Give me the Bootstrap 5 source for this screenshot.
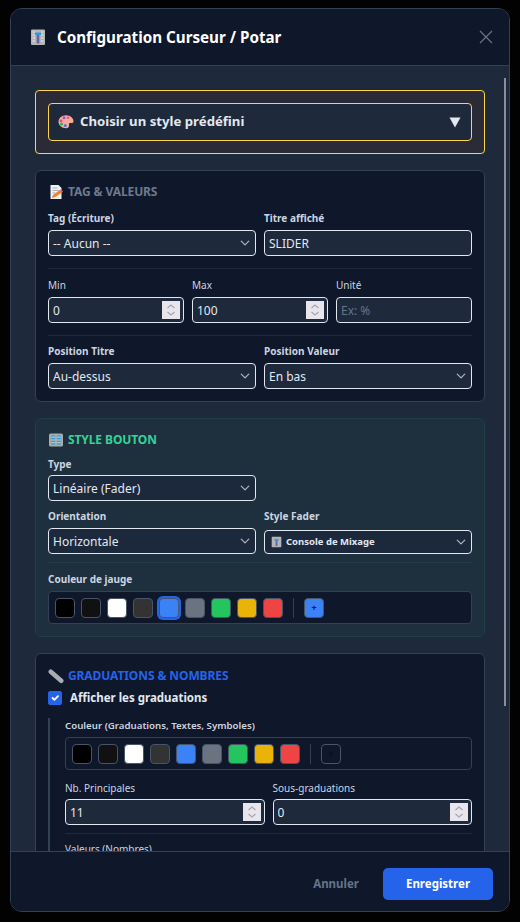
<!DOCTYPE html>
<html lang="fr" data-bs-theme="dark">
<head>
<meta charset="utf-8">
<title>Configuration Curseur / Potar</title>
<link rel="stylesheet" href="https://cdn.jsdelivr.net/npm/bootstrap@5.3.0/dist/css/bootstrap.min.css">
<style>
html,body{height:100%;margin:0;background:#020203;overflow:hidden;font-family:"Noto Sans",sans-serif}
.shell{height:922px;padding:8px 10px 10px}
.pane{height:904px;background:#0f172a;border:1px solid #334155;border-radius:12px;overflow:hidden;color:#e2e8f0;position:relative}
.pane .modal-header{height:57px;flex:none;padding:0 16px 0 19px;background:#0f172a;border-bottom:1px solid #334155;gap:11px;border-radius:0}
.ttl{font-size:15.2px;font-weight:700;color:#fff}
.xbtn{width:14px;height:14px;padding:0;border:0;background:none;display:flex}
.pane .modal-body{flex:1 1 0;min-height:0;overflow:hidden;background:#1e293b;padding:24px 24px 0}
.sbar{position:absolute;right:3px;top:69px;height:628px;width:2px;background:#8a8f96}
.pane .modal-footer{height:60px;flex:none;align-items:flex-start;background:#0f172a;border-top:1px solid #334155;padding:16px 16px 0 0;gap:24px;border-radius:0}
.pane .modal-footer>*{margin:0}
.btn-ann{height:32px;font-size:11.5px;font-weight:700;color:#64748b;padding:0;border:0;background:none}
.btn-save{width:110px;height:32px;font-size:11.5px;font-weight:700;color:#fff;background:#2563eb;border:0;border-radius:5px;padding:0}
.preset{background:#2a2b36;border:1px solid #fcd34d;border-radius:4px;padding:12px;margin-bottom:16px}
.preset-btn{height:38px;background:#1e293b;border:1px solid #fcd34d;border-radius:4px;padding:0 10px 0 9px;font-size:13.2px;font-weight:700;color:#e2e8f0;gap:6px}
.sect{background:#0f172a;border:1px solid #334155;border-radius:6px;padding:12px;margin-bottom:16px}
.sect.green{background:#1e2f3d;border-color:#1f3f46}
.sect.top13{padding-top:13px}
.sect-t{font-size:12px;font-weight:700;line-height:18px;margin-bottom:9px;display:flex;align-items:center;gap:4px;letter-spacing:-.1px}
.sect-t.gap11{margin-bottom:11px}
.sect-t.gap6{margin-bottom:6px}
.t-gray{color:#6b7a90}.t-green{color:#34d399}.t-blue{color:#2563eb}
.lab{display:block;font-size:10px;line-height:12px;font-weight:700;color:#cbd5e1;margin-bottom:6px}
.lab.thin{font-weight:400}
.lab.m5{margin-bottom:5px}
.lab.mid{font-weight:600;font-size:9.7px}
.fld.form-select,.fld.form-control{height:26px;min-height:0;padding:0 24px 0 4px;background-color:#1e293b;border:1px solid #e2e8f0;border-radius:4px;color:#e2e8f0;font-size:12px;line-height:24px;box-shadow:none}
.fld.form-select{padding-top:1px;background-position:right 5px center;background-size:10px 10px}
.fld.form-control::placeholder{color:#64748b}
.green .fld.form-select{background-color:#1c283c}
.fakesel.fld.form-select{height:24px;margin-top:8px;padding-top:0;display:flex;align-items:center;gap:4px;font-size:9.5px;font-weight:700;padding-left:6px}
.spin{position:absolute;right:4px;top:4px;width:18px;height:18px;background:#e8e6ec;display:flex;align-items:center;justify-content:center}
.rule{height:1px;background:#1e293b;margin:12px 0 10px}
.rule.r9{margin-bottom:9px}
.rule.r8{margin:8px 0 10px}
.rule.r89{margin:8px 0 9px}
.green .rule{background:#1f3f46}
.rowgap9{margin-bottom:9px}
.rowtop{margin-top:4px}
.swbox{height:33px;border:1px solid #334155;border-radius:4px;background:#0f172a;padding:0 6px;display:flex;align-items:center;gap:6px}
.sw{width:20px;height:20px;flex:none;border:1px solid #475569;border-radius:4px}
.sw.sel{box-shadow:0 0 0 2px #2563eb}
.vsep{width:1px;height:20px;background:#334155;margin:0 4px;flex:none}
.plus{font-size:9px;line-height:1;color:#0f172a;display:flex;align-items:center;justify-content:center;font-weight:700}
.plus.dim{background:#0f172a;color:#0b0f18}
.chk{display:flex;align-items:center;gap:8px;height:14px;margin:0 0 13px;font-size:11.5px;font-weight:700;color:#e2e8f0}
.chk .form-check-input{width:14px;height:14px;margin:0;background-color:#2563eb;border-color:#2563eb;border-radius:2px;flex:none}
.nest{border-left:2px solid #334155;padding:2px 0 0 15px;height:200px}
.glyph{flex:none;display:block}
</style>
</head>
<body>
<div class="shell">
<div class="modal-content pane">
  <div class="modal-header">
    <svg class="glyph" width="16" height="16" viewBox="0 0 16 16"><rect x="1" y="0.500" width="14" height="15.500" rx="1" fill="#b3b6b5"/><path d="M2.500 3h2.500M2.500 6h2.500M2.500 9h2.500M2.500 12h2.500M11 3h2.500M11 6h2.500M11 9h2.500M11 12h2.500" stroke="#e6e8e8" stroke-width="1"/><rect x="6.700" y="6" width="2.600" height="8.500" fill="#6a5fb0"/><rect x="5" y="3.500" width="6" height="2.500" rx=".5" fill="#2e9bdc"/></svg>
    <h5 class="modal-title ttl flex-grow-1">Configuration Curseur / Potar</h5>
    <button class="xbtn" type="button" aria-label="Fermer"><svg width="14" height="14" viewBox="0 0 14 14"><path d="M1 1l12 12M13 1L1 13" stroke="#6b7280" stroke-width="1.200"/></svg></button>
  </div>
  <div class="modal-body">
    <div class="preset">
      <div class="preset-btn d-flex align-items-center">
        <svg class="glyph" width="16" height="16" viewBox="0 0 16 16"><path d="M8 1.200c4.200 0 7.500 2.800 7.500 6 0 1.800-1.600 2-3 1.800-1.300-.2-1.900.6-1.500 1.700.5 1.300-.3 3.500-3 3.500C4 14.200.5 11.300.5 7.700.5 4 4 1.200 8 1.200z" fill="#f5ab96"/><circle cx="6" cy="3.800" r="1.500" fill="#9a55d0"/><circle cx="10" cy="3.800" r="1.300" fill="#e0559b"/><circle cx="3" cy="6.800" r="1.400" fill="#e0479a"/><circle cx="3.500" cy="10" r="1.500" fill="#22b84f"/><circle cx="7.300" cy="11.700" r="1.400" fill="#3b6cf6"/></svg>
        <span class="flex-grow-1">Choisir un style prédéfini</span>
        <svg class="glyph" width="12" height="11" viewBox="0 0 12 11"><path d="M0.500 0.500h11L6 10.500z" fill="#e2e8f0"/></svg>
      </div>
    </div>

    <div class="sect">
      <div class="sect-t gap11 t-gray">
        <svg class="glyph" width="16" height="16" viewBox="0 0 16 16"><path d="M2.500 1h8l3 3v11h-11z" fill="#f1f1ee"/><path d="M4.500 4h5M4.500 6.500h7M4.500 9h3" stroke="#9aa1ab" stroke-width=".8"/><path d="M4 14l1-3 7-5 2 2.500-7 4.500z" fill="#f57c28"/><path d="M12 6l2 2.500 1-1-1.700-2.500z" fill="#ef4b6c"/></svg>
        <span>TAG &amp; VALEURS</span>
      </div>
      <div class="row g-2">
        <div class="col-6"><label class="lab">Tag (Écriture)</label><select class="form-select fld"><option>-- Aucun --</option></select></div>
        <div class="col-6"><label class="lab">Titre affiché</label><input class="form-control fld" value="SLIDER"></div>
      </div>
      <div class="rule"></div>
      <div class="row g-2">
        <div class="col-4"><label class="lab thin">Min</label><div class="position-relative"><input class="form-control fld" value="0"><span class="spin"><svg width="10" height="14" viewBox="0 0 10 14"><path d="M1.500 5L5 2l3.500 3M1.500 9L5 12l3.500-3" fill="none" stroke="#a5a3ad" stroke-width="1.100"/></svg></span></div></div>
        <div class="col-4"><label class="lab thin">Max</label><div class="position-relative"><input class="form-control fld" value="100"><span class="spin"><svg width="10" height="14" viewBox="0 0 10 14"><path d="M1.500 5L5 2l3.500 3M1.500 9L5 12l3.500-3" fill="none" stroke="#a5a3ad" stroke-width="1.100"/></svg></span></div></div>
        <div class="col-4"><label class="lab thin">Unité</label><input class="form-control fld" placeholder="Ex: %"></div>
      </div>
      <div class="rule r9"></div>
      <div class="row g-2">
        <div class="col-6"><label class="lab">Position Titre</label><select class="form-select fld"><option>Au-dessus</option></select></div>
        <div class="col-6"><label class="lab">Position Valeur</label><select class="form-select fld"><option>En bas</option></select></div>
      </div>
    </div>

    <div class="sect green">
      <div class="sect-t t-green">
        <svg class="glyph" width="16" height="16" viewBox="0 0 16 16"><rect x="1" y="1.500" width="14" height="13" rx="1.500" fill="#a8abaa"/><path d="M3 3.500h4v3.500h-4zM9 3.500h4v3.500h-4zM3 9h4v3.500h-4zM9 9h4v3.500h-4z" fill="#2e9bdc"/><path d="M3 5.200h4M9 5.200h4M3 10.700h4M9 10.700h4" stroke="#d6e8f4" stroke-width=".8"/></svg>
        <span>STYLE BOUTON</span>
      </div>
      <label class="lab m5">Type</label>
      <div class="row g-2 rowgap9"><div class="col-6"><select class="form-select fld"><option>Linéaire (Fader)</option></select></div></div>
      <div class="row g-2">
        <div class="col-6"><label class="lab">Orientation</label><select class="form-select fld"><option>Horizontale</option></select></div>
        <div class="col-6"><label class="lab">Style Fader</label>
          <div class="form-select fld fakesel">
            <svg class="glyph" width="11" height="12" viewBox="0 0 16 16"><rect x="1" y="0.500" width="14" height="15" rx="1" fill="#b3b6b5"/><rect x="6.700" y="5" width="2.600" height="9" fill="#6a5fb0"/><rect x="5" y="3.500" width="6" height="2.500" fill="#2e9bdc"/></svg>
            <span>Console de Mixage</span>
          </div>
        </div>
      </div>
      <div class="rule r8"></div>
      <label class="lab">Couleur de jauge</label>
      <div class="swbox">
        <span class="sw" style="background:#000"></span><span class="sw" style="background:#111"></span><span class="sw" style="background:#fff"></span><span class="sw" style="background:#333"></span><span class="sw sel" style="background:#3b82f6"></span><span class="sw" style="background:#6b7280"></span><span class="sw" style="background:#22c55e"></span><span class="sw" style="background:#eab308"></span><span class="sw" style="background:#ef4444"></span>
        <span class="vsep"></span>
        <span class="sw plus" style="background:#3b82f6">+</span>
      </div>
    </div>

    <div class="sect top13">
      <div class="sect-t gap6 t-blue">
        <svg class="glyph" width="16" height="16" viewBox="0 0 16 16"><path d="M2.800 3.800L13.200 12.700" stroke="#a9adb3" stroke-width="4.600" stroke-linecap="round"/></svg>
        <span>GRADUATIONS &amp; NOMBRES</span>
      </div>
      <label class="chk"><input class="form-check-input" type="checkbox" checked><span>Afficher les graduations</span></label>
      <div class="nest">
        <label class="lab mid m5">Couleur (Graduations, Textes, Symboles)</label>
        <div class="swbox">
          <span class="sw" style="background:#000"></span><span class="sw" style="background:#111"></span><span class="sw" style="background:#fff"></span><span class="sw" style="background:#333"></span><span class="sw" style="background:#3b82f6"></span><span class="sw" style="background:#6b7280"></span><span class="sw" style="background:#22c55e"></span><span class="sw" style="background:#eab308"></span><span class="sw" style="background:#ef4444"></span>
          <span class="vsep"></span>
          <span class="sw plus dim">+</span>
        </div>
        <div class="row g-2 rowtop">
          <div class="col-6"><label class="lab thin m5">Nb. Principales</label><div class="position-relative"><input class="form-control fld" value="11"><span class="spin"><svg width="10" height="14" viewBox="0 0 10 14"><path d="M1.500 5L5 2l3.500 3M1.500 9L5 12l3.500-3" fill="none" stroke="#a5a3ad" stroke-width="1.100"/></svg></span></div></div>
          <div class="col-6"><label class="lab thin m5">Sous-graduations</label><div class="position-relative"><input class="form-control fld" value="0"><span class="spin"><svg width="10" height="14" viewBox="0 0 10 14"><path d="M1.500 5L5 2l3.500 3M1.500 9L5 12l3.500-3" fill="none" stroke="#a5a3ad" stroke-width="1.100"/></svg></span></div></div>
        </div>
        <div class="rule r89"></div>
        <label class="lab thin">Valeurs (Nombres)</label>
      </div>
    </div>
  </div>
  <div class="sbar"></div>
  <div class="modal-footer">
    <button class="btn-ann" type="button">Annuler</button>
    <button class="btn-save" type="button">Enregistrer</button>
  </div>
</div>
</div>
</body>
</html>
